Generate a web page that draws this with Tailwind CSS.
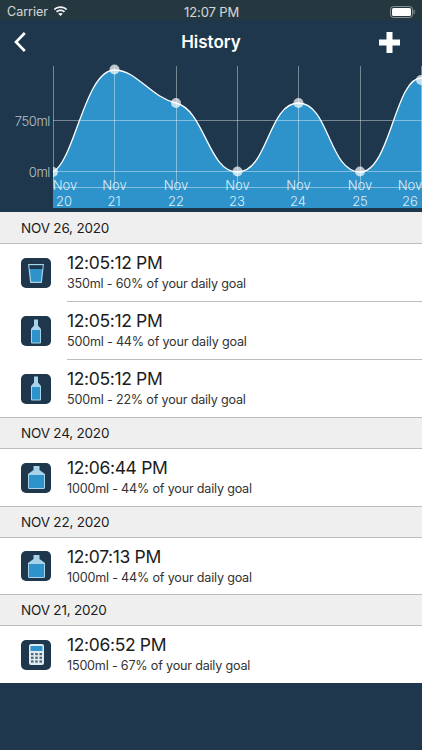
<!DOCTYPE html>
<html lang="en">
<head>
    <meta charset="UTF-8">
    <meta name="viewport" content="width=device-width, initial-scale=1.0">
    <title>History</title>
    <script src="https://cdn.jsdelivr.net/npm/@tailwindcss/browser@4"></script>
</head>
<body class="w-[422px] h-[750px] overflow-hidden bg-[#1e374d] font-['Inter',sans-serif] text-[#1c1c1c]">

    <!-- status bar -->
    <div class="h-5 bg-[#25373f] flex items-center justify-between pt-[3px] pl-[7px] pr-[7px] text-white/80 text-[12.500px] relative">
        <div class="flex items-center gap-[5px]">
            <span class="relative top-[1px]">Carrier</span>
            <svg width="15" height="11" viewBox="0 0 16 12" fill="#f2f4f5"><path d="M8 2.200c2.400 0 4.500.9 6.100 2.400l1.200-1.300C13.400 1.400 10.800.3 8 .3S2.600 1.400.7 3.300l1.200 1.300C3.500 3.100 5.600 2.200 8 2.200z"/><path d="M8 5.700c1.400 0 2.700.5 3.700 1.400l1.300-1.300C11.600 4.500 9.900 3.800 8 3.800s-3.600.7-5 2l1.300 1.300c1-.9 2.300-1.400 3.700-1.400z"/><path d="M8 7.500c-1 0-1.800.3-2.500.9L8 11l2.500-2.600C9.800 7.800 9 7.500 8 7.500z"/></svg>
        </div>
        <span class="absolute left-[184px] top-[3px] text-[13px] tracking-[-0.1px]">12:07 PM</span>
        <svg width="25" height="12" viewBox="0 0 25 12"><rect x="0.500" y="0.500" width="22" height="11" rx="3" fill="none" stroke="#fff" stroke-opacity="0.45"/><rect x="2" y="2" width="19" height="8" rx="1.500" fill="#fff"/><rect x="23.500" y="4" width="1.200" height="4" rx="0.600" fill="#fff" fill-opacity="0.45"/></svg>
    </div>

    <!-- nav bar -->
    <div class="h-[40px] flex items-center justify-between pt-[4px] pl-[14px] pr-[22px] relative">
        <svg width="12" height="20" viewBox="0 0 12 20" fill="none" stroke="#fff" stroke-width="2.600"><path d="M10.800 1 2 10l8.800 9"/></svg>
        <span class="absolute left-0 right-0 top-[10px] text-center text-white text-[17px] font-semibold">History</span>
        <svg width="21" height="21" viewBox="0 0 21 21" fill="#fff"><path d="M7.500 0h6v7.500H21v6h-7.500V21h-6v-7.500H0v-6h7.500z"/></svg>
    </div>

    <!-- chart -->
    <svg class="block" width="422" height="152" viewBox="0 60 422 152" font-family="Inter, sans-serif">
        <path d="M53 172C75 160 85 70 114.500 70C137 70 150 97 176 103C205 110 208 172 237.500 172C268 172 268 103 298.500 103C329 103 329 172 360 172C390 172 395 78 421 78L422 78V208H53Z" fill="#2d93ca"/>
        <g stroke="#fff" stroke-opacity="0.4">
            <path d="M53.500 66V187M114.500 66V187M176.500 66V187M237.500 66V187M298.500 66V187M360.500 66V187M421.500 66V187"/>
            <path d="M53 120.500H422M53 171.500H422M53 187.500H422"/>
        </g>
        <path d="M53 172C75 160 85 70 114.500 70C137 70 150 97 176 103C205 110 208 172 237.500 172C268 172 268 103 298.500 103C329 103 329 172 360 172C390 172 395 78 421 78L422 78" fill="none" stroke="#fff" stroke-width="1.300"/>
        <g fill="#fff" fill-opacity="0.7">
            <path d="M53 167a5 5 0 0 1 0 10z"/>
            <circle cx="114.500" cy="69.500" r="5"/>
            <circle cx="176" cy="103" r="5"/>
            <circle cx="237.500" cy="171.500" r="5"/>
            <circle cx="298.500" cy="103" r="5"/>
            <circle cx="360" cy="171.500" r="5"/>
            <circle cx="421" cy="80" r="5"/>
        </g>
        <g fill="#fff" fill-opacity="0.7" font-size="13" font-weight="300" letter-spacing="-0.4" text-anchor="end">
            <text x="50" y="125.500">750ml</text>
            <text x="50" y="176.500">0ml</text>
        </g>
        <g fill="#fff" fill-opacity="0.85" font-size="13" font-weight="300" text-anchor="middle">
            <text x="65" y="190">Nov</text><text x="64" y="206">20</text>
            <text x="114.500" y="190">Nov</text><text x="114" y="206">21</text>
            <text x="176" y="190">Nov</text><text x="176" y="206">22</text>
            <text x="237.500" y="190">Nov</text><text x="237" y="206">23</text>
            <text x="298.500" y="190">Nov</text><text x="298" y="206">24</text>
            <text x="360" y="190">Nov</text><text x="360" y="206">25</text>
            <text x="410" y="190">Nov</text><text x="410" y="206">26</text>
        </g>
    </svg>

    <!-- history list -->
    <div class="bg-white">
        <div class="h-[32px] bg-[#efefef] border-b border-[#bdbdbd] flex items-center pt-[2px] pl-[21px] text-[13.500px] tracking-[-0.2px]">NOV 26, 2020</div>

        <div class="h-[58px] flex items-center pl-[21px]">
            <div class="w-[30px] h-[30px] rounded-[5px] bg-[#1e374d] shrink-0 flex items-center justify-center">
                <svg width="16" height="19" viewBox="0 0 16 19"><path d="M.7.7h14.600l-2 17.600H2.700z" fill="#2d93ca" stroke="#a9d3ea" stroke-width="1.200"/><path d="M1.300 1.300h13.400l-.4 3.700H1.700z" fill="#1e374d"/></svg>
            </div>
            <div class="ml-4 flex-1 h-full border-b border-[#bdbdbd] pt-[7px]">
                <div class="text-[17.500px] leading-[24px] tracking-[-0.35px]">12:05:12 PM</div>
                <div class="text-[12.600px] leading-[17px] tracking-[-0.2px] text-[#333]">350ml - 60% of your daily goal</div>
            </div>
        </div>

        <div class="h-[58px] flex items-center pl-[21px]">
            <div class="w-[30px] h-[30px] rounded-[5px] bg-[#1e374d] shrink-0 flex items-center justify-center">
                <svg width="10" height="25" viewBox="0 0 10 25"><path d="M3 .5h4v6l3 3.500v13.500a1 1 0 0 1-1 1H1a1 1 0 0 1-1-1V10l3-3.500z" fill="#a9d3ea"/><rect x="1" y="11" width="8" height="12.500" fill="#2d93ca"/></svg>
            </div>
            <div class="ml-4 flex-1 h-full border-b border-[#bdbdbd] pt-[7px]">
                <div class="text-[17.500px] leading-[24px] tracking-[-0.35px]">12:05:12 PM</div>
                <div class="text-[12.600px] leading-[17px] tracking-[-0.2px] text-[#333]">500ml - 44% of your daily goal</div>
            </div>
        </div>

        <div class="h-[58px] flex items-center pl-[21px] border-b border-[#bdbdbd]">
            <div class="w-[30px] h-[30px] rounded-[5px] bg-[#1e374d] shrink-0 flex items-center justify-center">
                <svg width="10" height="25" viewBox="0 0 10 25"><path d="M3 .5h4v6l3 3.500v13.500a1 1 0 0 1-1 1H1a1 1 0 0 1-1-1V10l3-3.500z" fill="#a9d3ea"/><rect x="1" y="11" width="8" height="12.500" fill="#2d93ca"/></svg>
            </div>
            <div class="ml-4 flex-1 h-full pt-[7px]">
                <div class="text-[17.500px] leading-[24px] tracking-[-0.35px]">12:05:12 PM</div>
                <div class="text-[12.600px] leading-[17px] tracking-[-0.2px] text-[#333]">500ml - 22% of your daily goal</div>
            </div>
        </div>

        <div class="h-[31px] bg-[#efefef] border-b border-[#bdbdbd] flex items-center pl-[21px] text-[13.500px] tracking-[-0.2px]">NOV 24, 2020</div>
        <div class="h-[58px] flex items-center pl-[21px] border-b border-[#bdbdbd]">
            <div class="w-[30px] h-[30px] rounded-[5px] bg-[#1e374d] shrink-0 flex items-center justify-center">
                <svg width="17" height="23" viewBox="0 0 17 23"><path d="M5.500 0h6v4l5.500 4v13.500a1.500 1.500 0 0 1-1.500 1.500h-14A1.500 1.500 0 0 1 0 21.500V8l5.500-4z" fill="#a9d3ea"/><rect x="1" y="9" width="15" height="13" fill="#2d93ca"/></svg>
            </div>
            <div class="ml-4 flex-1 h-full pt-[7px]">
                <div class="text-[17.500px] leading-[24px] tracking-[-0.35px]">12:06:44 PM</div>
                <div class="text-[12.600px] leading-[17px] tracking-[-0.2px] text-[#333]">1000ml - 44% of your daily goal</div>
            </div>
        </div>

        <div class="h-[31px] bg-[#efefef] border-b border-[#bdbdbd] flex items-center pl-[21px] text-[13.500px] tracking-[-0.2px]">NOV 22, 2020</div>
        <div class="h-[57px] flex items-center pl-[21px] border-b border-[#bdbdbd]">
            <div class="w-[30px] h-[30px] rounded-[5px] bg-[#1e374d] shrink-0 flex items-center justify-center">
                <svg width="17" height="23" viewBox="0 0 17 23"><path d="M5.500 0h6v4l5.500 4v13.500a1.500 1.500 0 0 1-1.500 1.500h-14A1.500 1.500 0 0 1 0 21.500V8l5.500-4z" fill="#a9d3ea"/><rect x="1" y="9" width="15" height="13" fill="#2d93ca"/></svg>
            </div>
            <div class="ml-4 flex-1 h-full pt-[7px]">
                <div class="text-[17.500px] leading-[24px] tracking-[-0.35px]">12:07:13 PM</div>
                <div class="text-[12.600px] leading-[17px] tracking-[-0.2px] text-[#333]">1000ml - 44% of your daily goal</div>
            </div>
        </div>

        <div class="h-[31px] bg-[#efefef] border-b border-[#bdbdbd] flex items-center pl-[21px] text-[13.500px] tracking-[-0.2px]">NOV 21, 2020</div>
        <div class="h-[57px] flex items-center pl-[21px]">
            <div class="w-[30px] h-[30px] rounded-[5px] bg-[#1e374d] shrink-0 flex items-center justify-center">
                <svg width="15" height="21" viewBox="0 0 15 21"><rect width="15" height="21" rx="2" fill="#dfeaf1"/><rect x="1.500" y="2" width="12" height="5" fill="#2d93ca"/><g fill="#1e374d" fill-opacity="0.75"><rect x="2" y="9" width="2.500" height="2.200"/><rect x="6.250" y="9" width="2.500" height="2.200"/><rect x="10.500" y="9" width="2.500" height="2.200"/><rect x="2" y="12.700" width="2.500" height="2.200"/><rect x="6.250" y="12.700" width="2.500" height="2.200"/><rect x="10.500" y="12.700" width="2.500" height="2.200"/><rect x="2" y="16.400" width="2.500" height="2.200"/><rect x="6.250" y="16.400" width="2.500" height="2.200"/><rect x="10.500" y="16.400" width="2.500" height="2.200"/></g></svg>
            </div>
            <div class="ml-4 flex-1 h-full pt-[7px]">
                <div class="text-[17.500px] leading-[24px] tracking-[-0.35px]">12:06:52 PM</div>
                <div class="text-[12.600px] leading-[17px] tracking-[-0.2px] text-[#333]">1500ml - 67% of your daily goal</div>
            </div>
        </div>
    </div>

</body>
</html>
